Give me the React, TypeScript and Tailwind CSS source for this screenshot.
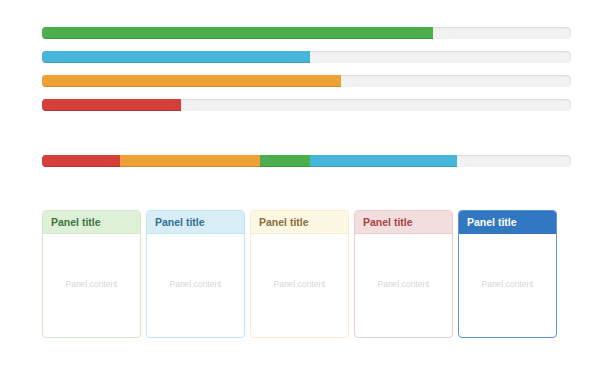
const bars = [
  { width: 391, color: 'bg-[#4cae4c]' },
  { width: 268, color: 'bg-[#46b5da]' },
  { width: 299, color: 'bg-[#eea236]' },
  { width: 139, color: 'bg-[#d43f3a]' },
]

const stacked = [
  { width: 78, color: 'bg-[#d43f3a]' },
  { width: 140, color: 'bg-[#eea236]' },
  { width: 50, color: 'bg-[#4cae4c]' },
  { width: 147, color: 'bg-[#46b5da]' },
]

const panels = [
  { border: 'border-[#d6e9c6]', head: 'bg-[#dff0d8] text-[#3c763d] border-[#d6e9c6]' },
  { border: 'border-[#bce8f1]', head: 'bg-[#d9edf7] text-[#31708f] border-[#bce8f1]' },
  { border: 'border-[#faebcc]', head: 'bg-[#fcf8e3] text-[#8a6d3b] border-[#faebcc]' },
  { border: 'border-[#ebccd1]', head: 'bg-[#f2dede] text-[#a94442] border-[#ebccd1]' },
  { border: 'border-[#5a93d3]', head: 'bg-[#3277c2] text-white border-[#3277c2]' },
]

function Track({ children }: { children: React.ReactNode }) {
  return (
    <div className="flex h-[12px] w-[529px] overflow-hidden rounded-[4px] bg-[#f2f2f2] shadow-[inset_0_1px_2px_rgba(0,0,0,0.1)]">
      {children}
    </div>
  )
}

export default function App() {
  return (
    <div
      className="w-[600px] h-[365px] bg-white pl-[42px] pt-[27px]"
      style={{ fontFamily: '"Liberation Sans", Arial, sans-serif' }}
    >
      {/* Single bars */}
      <div className="flex flex-col gap-[12px]">
        {bars.map((b, i) => (
          <Track key={i}>
            <div
              className={`h-full ${b.color} shadow-[inset_0_-1px_0_rgba(0,0,0,0.15)]`}
              style={{ width: b.width }}
            />
          </Track>
        ))}
      </div>

      {/* Stacked bar */}
      <div className="mt-[44px]">
        <Track>
          {stacked.map((s, i) => (
            <div
              key={i}
              className={`h-full ${s.color} shadow-[inset_0_-1px_0_rgba(0,0,0,0.15)]`}
              style={{ width: s.width }}
            />
          ))}
        </Track>
      </div>

      {/* Panels */}
      <div className="mt-[43px] flex gap-[5px]">
        {panels.map((p, i) => (
          <div
            key={i}
            className={`flex h-[128px] w-[99px] flex-col overflow-hidden rounded-[4px] border ${p.border}`}
          >
            <div className={`h-[23px] shrink-0 border-b px-[8px] pt-[5px] text-[10.5px] font-bold leading-[13px] ${p.head}`}>
              Panel title
            </div>
            <div className="flex flex-1 items-center justify-center pb-[2px] text-[8.5px] text-[#d6d6d6]">
              Panel content
            </div>
          </div>
        ))}
      </div>
    </div>
  )
}
